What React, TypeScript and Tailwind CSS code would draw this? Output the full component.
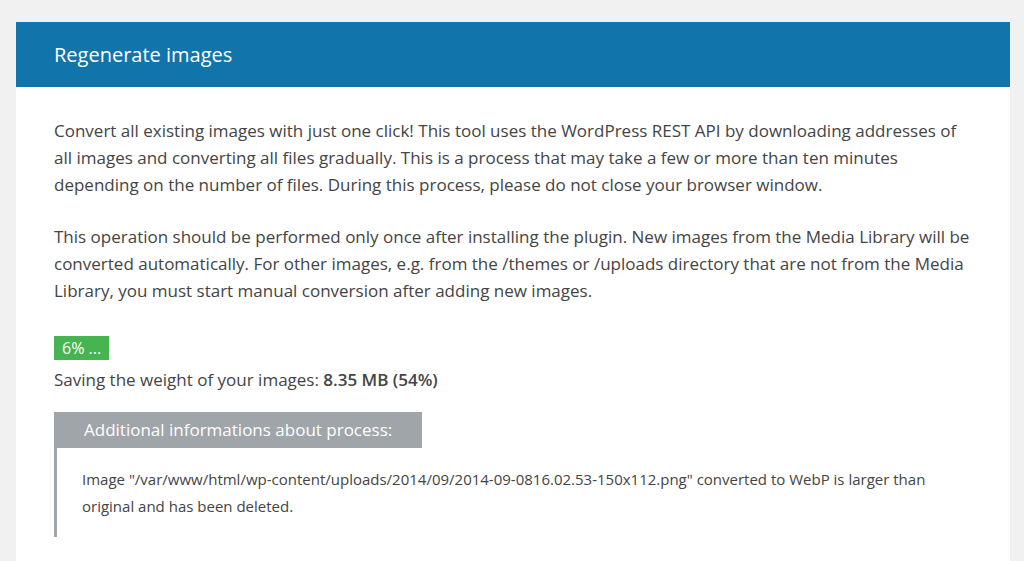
const FONT = { fontFamily: '"Open Sans", "Noto Sans", sans-serif' };

export default function App() {
  return (
    <div className="min-h-[561px] bg-[#f1f1f1] px-4 pt-[22px]" style={FONT}>
      <div className="min-h-[539px] w-[994px] bg-white">
        <div className="flex h-[65px] items-center bg-[#1175ac] px-[38px]">
          <h2 className="text-[20px] text-white">Regenerate images</h2>
        </div>
        <div className="px-[38px] pt-[30px] text-[17px] leading-[27px] text-[#444]">
          <p>
            Convert all existing images with just one click! This tool uses the WordPress REST API by
            downloading addresses of all images and converting all files gradually. This is a process that may
            take a few or more than ten minutes depending on the number of files. During this process, please do
            not close your browser window.
          </p>
          <p className="mt-[25px]">
            This operation should be performed only once after installing the plugin. New images from the Media
            Library will be converted automatically. For other images, e.g. from the /themes or /uploads directory
            that are not from the Media Library, you must start manual conversion after adding new images.
          </p>
          <div className="mt-[32px] inline-flex h-6 items-center bg-[#46b450] px-2 text-[16px] font-medium text-white">
            6% ...
          </div>
          <p className="mt-[5px]">
            Saving the weight of your images: <strong className="font-semibold">8.35 MB (54%)</strong>
          </p>
          <div className="mt-[19px] inline-flex h-9 items-center bg-[#a0a5aa] px-[30px] text-[17px] text-white">
            Additional informations about process:
          </div>
          <div className="border-l-[3px] border-[#a0a5aa] pb-[17px] pt-[18px] pl-[25px] pr-10 text-[15px] leading-[27px]">
            Image "/var/www/html/wp-content/uploads/2014/09/2014-09-0816.02.53-150x112.png" converted to WebP is
            larger than original and has been deleted.
          </div>
        </div>
      </div>
    </div>
  );
}
